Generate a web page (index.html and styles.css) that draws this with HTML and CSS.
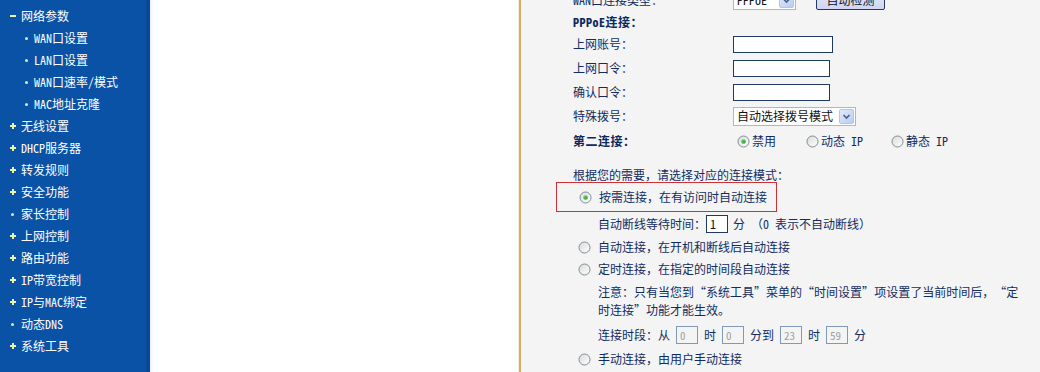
FILE: index.html
```html
<!DOCTYPE html>
<html lang="zh-CN">
<head>
<meta charset="utf-8">
<title>WAN口设置</title>
<link rel="stylesheet" href="styles.css">
</head>
<body>
<svg class="defs" width="0" height="0" aria-hidden="true">
  <defs>
    <linearGradient id="rgFill" x1="0" y1="0" x2="1" y2="1">
      <stop offset="0" stop-color="#d9dcd6"/>
      <stop offset="1" stop-color="#ffffff"/>
    </linearGradient>
    <linearGradient id="rgDot" x1="0" y1="0" x2="1" y2="1">
      <stop offset="0" stop-color="#7ad07a"/>
      <stop offset="1" stop-color="#1f9a2a"/>
    </linearGradient>
    <linearGradient id="arrowBg" x1="0" y1="0" x2="1" y2="1">
      <stop offset="0" stop-color="#e2ebfd"/>
      <stop offset="1" stop-color="#b7cbf2"/>
    </linearGradient>
  </defs>
</svg>
<div class="page">
  <nav class="sidebar">
    <ul class="menu">
      <li class="item"><span class="mark"><span class="minus"></span></span>网络参数</li>
      <li class="item sub"><span class="mark"><span class="dot"></span></span>WAN口设置</li>
      <li class="item sub"><span class="mark"><span class="dot"></span></span>LAN口设置</li>
      <li class="item sub"><span class="mark"><span class="dot"></span></span>WAN口速率/模式</li>
      <li class="item sub"><span class="mark"><span class="dot"></span></span>MAC地址克隆</li>
      <li class="item"><span class="mark"><span class="plus"></span></span>无线设置</li>
      <li class="item"><span class="mark"><span class="plus"></span></span>DHCP服务器</li>
      <li class="item"><span class="mark"><span class="plus"></span></span>转发规则</li>
      <li class="item"><span class="mark"><span class="plus"></span></span>安全功能</li>
      <li class="item"><span class="mark"><span class="dot"></span></span>家长控制</li>
      <li class="item"><span class="mark"><span class="plus"></span></span>上网控制</li>
      <li class="item"><span class="mark"><span class="plus"></span></span>路由功能</li>
      <li class="item"><span class="mark"><span class="plus"></span></span>IP带宽控制</li>
      <li class="item"><span class="mark"><span class="plus"></span></span>IP与MAC绑定</li>
      <li class="item"><span class="mark"><span class="dot"></span></span>动态DNS</li>
      <li class="item"><span class="mark"><span class="plus"></span></span>系统工具</li>
    </ul>
  </nav>
  <div class="blank"></div>
  <div class="divider"></div>
  <main class="main">
    <div class="row row-top">
      <span class="label">WAN口连接类型：</span>
      <span class="select select-type"><span class="select-text">PPPoE</span><svg class="arrow" viewBox="0 0 15 15" width="15" height="15"><rect x="0.5" y="0.5" width="14" height="14" rx="1.5" fill="url(#arrowBg)" stroke="#b3c5ea"/><path d="M4.5 6l3 3 3-3" fill="none" stroke="#4d6185" stroke-width="1.6"/></svg></span>
      <span class="btn">自动检测</span>
    </div>
    <div class="row row-title"><span class="label bold">PPPoE连接：</span></div>
    <div class="row"><span class="label">上网账号：</span><span class="input input-wide"></span></div>
    <div class="row"><span class="label">上网口令：</span><span class="input"></span></div>
    <div class="row"><span class="label">确认口令：</span><span class="input"></span></div>
    <div class="row"><span class="label">特殊拨号：</span>
      <span class="select select-dial"><span class="select-text">自动选择拨号模式</span><svg class="arrow" viewBox="0 0 15 15" width="15" height="15"><rect x="0.5" y="0.5" width="14" height="14" rx="1.5" fill="url(#arrowBg)" stroke="#b3c5ea"/><path d="M4.5 6l3 3 3-3" fill="none" stroke="#4d6185" stroke-width="1.6"/></svg></span>
    </div>
    <div class="row row-second"><span class="label bold">第二连接：</span>
      <span class="choice choice-1"><svg class="radio" viewBox="0 0 13 13" width="13" height="13"><circle cx="6.5" cy="6.5" r="5.5" fill="url(#rgFill)" stroke="#7e8b98"/><circle cx="6.5" cy="6.5" r="2.3" fill="url(#rgDot)"/></svg>禁用</span>
      <span class="choice choice-2"><svg class="radio" viewBox="0 0 13 13" width="13" height="13"><circle cx="6.5" cy="6.5" r="5.5" fill="url(#rgFill)" stroke="#7e8b98"/></svg>动态 IP</span>
      <span class="choice"><svg class="radio" viewBox="0 0 13 13" width="13" height="13"><circle cx="6.5" cy="6.5" r="5.5" fill="url(#rgFill)" stroke="#7e8b98"/></svg>静态 IP</span>
    </div>

    <div class="intro">根据您的需要，请选择对应的连接模式：</div>
    <div class="option option-selected"><svg class="radio" viewBox="0 0 13 13" width="13" height="13"><circle cx="6.5" cy="6.5" r="5.5" fill="url(#rgFill)" stroke="#7e8b98"/><circle cx="6.5" cy="6.5" r="2.3" fill="url(#rgDot)"/></svg>按需连接，在有访问时自动连接</div>
    <div class="detail detail-idle">自动断线等待时间：<span class="small-input">1</span><span class="unit">分 <span class="fw">（</span>0 表示不自动断线<span class="fw">）</span></span></div>
    <div class="option"><svg class="radio" viewBox="0 0 13 13" width="13" height="13"><circle cx="6.5" cy="6.5" r="5.5" fill="url(#rgFill)" stroke="#7e8b98"/></svg>自动连接，在开机和断线后自动连接</div>
    <div class="option"><svg class="radio" viewBox="0 0 13 13" width="13" height="13"><circle cx="6.5" cy="6.5" r="5.5" fill="url(#rgFill)" stroke="#7e8b98"/></svg>定时连接，在指定的时间段自动连接</div>
    <div class="note">注意：只有当您到<span class="fw">“</span>系统工具<span class="fw">”</span>菜单的<span class="fw">“</span>时间设置<span class="fw">”</span>项设置了当前时间后，<span class="fw">“</span>定时连接<span class="fw">”</span>功能才能生效。</div>
    <div class="detail detail-time">连接时段：从<span class="time-input">0</span>时<span class="time-input">0</span>分到<span class="time-input">23</span>时<span class="time-input">59</span>分</div>
    <div class="option option-last"><svg class="radio" viewBox="0 0 13 13" width="13" height="13"><circle cx="6.5" cy="6.5" r="5.5" fill="url(#rgFill)" stroke="#7e8b98"/></svg>手动连接，由用户手动连接</div>
  </main>
</div>
</body>
</html>
```

FILE: styles.css
```css
* { box-sizing: border-box; }

html, body {
  margin: 0;
  padding: 0;
  height: 372px;
  overflow: hidden;
  background: #ffffff;
}

body {
  font-family: "Noto Sans Mono CJK SC", "Noto Sans CJK SC", sans-serif;
  font-size: 12px;
  line-height: 16px;
  text-spacing-trim: space-all;
}

.defs { position: absolute; width: 0; height: 0; }

.page {
  display: flex;
  height: 372px;
}

/* ---------- sidebar ---------- */
.sidebar {
  width: 150px;
  flex: none;
  background: linear-gradient(to right, #0a52a6 0, #0a52a6 146px, #08479a 146px, #08479a 150px);
  color: #ffffff;
}

.menu {
  list-style: none;
  margin: 0;
  padding: 5px 0 0 0;
}

.item {
  display: flex;
  align-items: center;
  height: 22px;
  padding-left: 10px;
  white-space: nowrap;
}

.item.sub { padding-left: 24px; }

.mark {
  width: 11px;
  flex: none;
  display: flex;
  align-items: center;
  height: 22px;
}

.sub .mark { width: 10px; }

.plus {
  width: 6px;
  height: 6px;
  background:
    linear-gradient(#eef3ae, #eef3ae) center / 6px 2px no-repeat,
    linear-gradient(#eef3ae, #eef3ae) center / 2px 6px no-repeat;
}

.minus {
  width: 6px;
  height: 2px;
  background: #eef3ae;
}

.dot {
  width: 3px;
  height: 3px;
  margin-left: 1px;
  border-radius: 50%;
  background: #dfeea0;
}

/* ---------- middle ---------- */
.blank {
  width: 368px;
  flex: none;
  background: linear-gradient(to right, #eaf2fb 0, #ffffff 4px, #ffffff 100%);
}

.divider {
  width: 3px;
  flex: none;
  background: linear-gradient(to right, #f4ead4 0, #f4ead4 1px, #d4ae6c 1px, #d4ae6c 3px);
}

/* ---------- main ---------- */
.main {
  flex: 1;
  background: #f4f4f4;
  color: #112c62;
  padding-left: 52px;
  padding-top: 0;
}

.fw { font-feature-settings: "fwid" 1; }

.row {
  display: flex;
  align-items: center;
  height: 24px;
  white-space: nowrap;
}

.row-top {
  height: 22px;
  margin-top: -11px;
}

.row-title { height: 21px; }

.row-second { height: 26px; }

.label {
  width: 160px;
  flex: none;
}

.bold {
  font-weight: bold;
  color: #0d285c;
  letter-spacing: 0.5px;
}

.input {
  width: 97px;
  height: 17px;
  background: #ffffff;
  border: 1px solid #1f3a62;
}

.input-wide { width: 100px; }

.select {
  display: flex;
  align-items: center;
  justify-content: space-between;
  height: 19px;
  background: #ffffff;
  border: 1px solid #a9b8cc;
  padding: 0 1px 0 3px;
  color: #111111;
}

.select-type { width: 63px; }
.select-dial { width: 123px; }

.arrow { display: block; flex: none; }

.btn {
  margin-left: 20px;
  width: 69px;
  height: 19px;
  border: 1px solid #25386a;
  border-radius: 2px;
  background: linear-gradient(#e4e8fb, #cfd5f4);
  color: #111111;
  display: flex;
  align-items: center;
  justify-content: center;
}

.choice {
  display: flex;
  align-items: center;
  padding-left: 4px;
}

.choice .radio { margin-right: 2px; }
.choice-1 { width: 69px; }
.choice-2 { width: 85px; }

.radio { display: block; flex: none; }

.intro {
  margin-top: 13px;
  height: 15px;
  line-height: 15px;
  white-space: nowrap;
}

.option {
  display: flex;
  align-items: center;
  height: 22px;
  padding-left: 5px;
  white-space: nowrap;
}

.option .radio { margin-right: 7px; }

.option-selected {
  margin-left: -17px;
  padding-left: 22px;
  width: 221px;
  height: 30px;
  border: 1px solid #cf2f35;
}

.option-last { margin-top: 1px; }

.detail {
  display: flex;
  align-items: center;
  height: 24px;
  padding-left: 25px;
  white-space: nowrap;
}

.small-input {
  width: 22px;
  height: 18px;
  background: #ffffff;
  border: 1px solid #1f3a62;
  color: #111111;
  padding-left: 3px;
  line-height: 16px;
  margin-right: 5px;
}

.note {
  margin-top: 3px;
  padding-left: 25px;
  width: 447px;
  line-height: 18px;
}

.detail-time { margin-top: 4px; }

.time-input {
  width: 22px;
  height: 18px;
  margin: 0 6px;
  background: #f4f4f4;
  border: 1px solid #7f9ab8;
  color: #a0a0a0;
  padding-left: 3px;
  line-height: 16px;
  font-size: 11px;
}
```
